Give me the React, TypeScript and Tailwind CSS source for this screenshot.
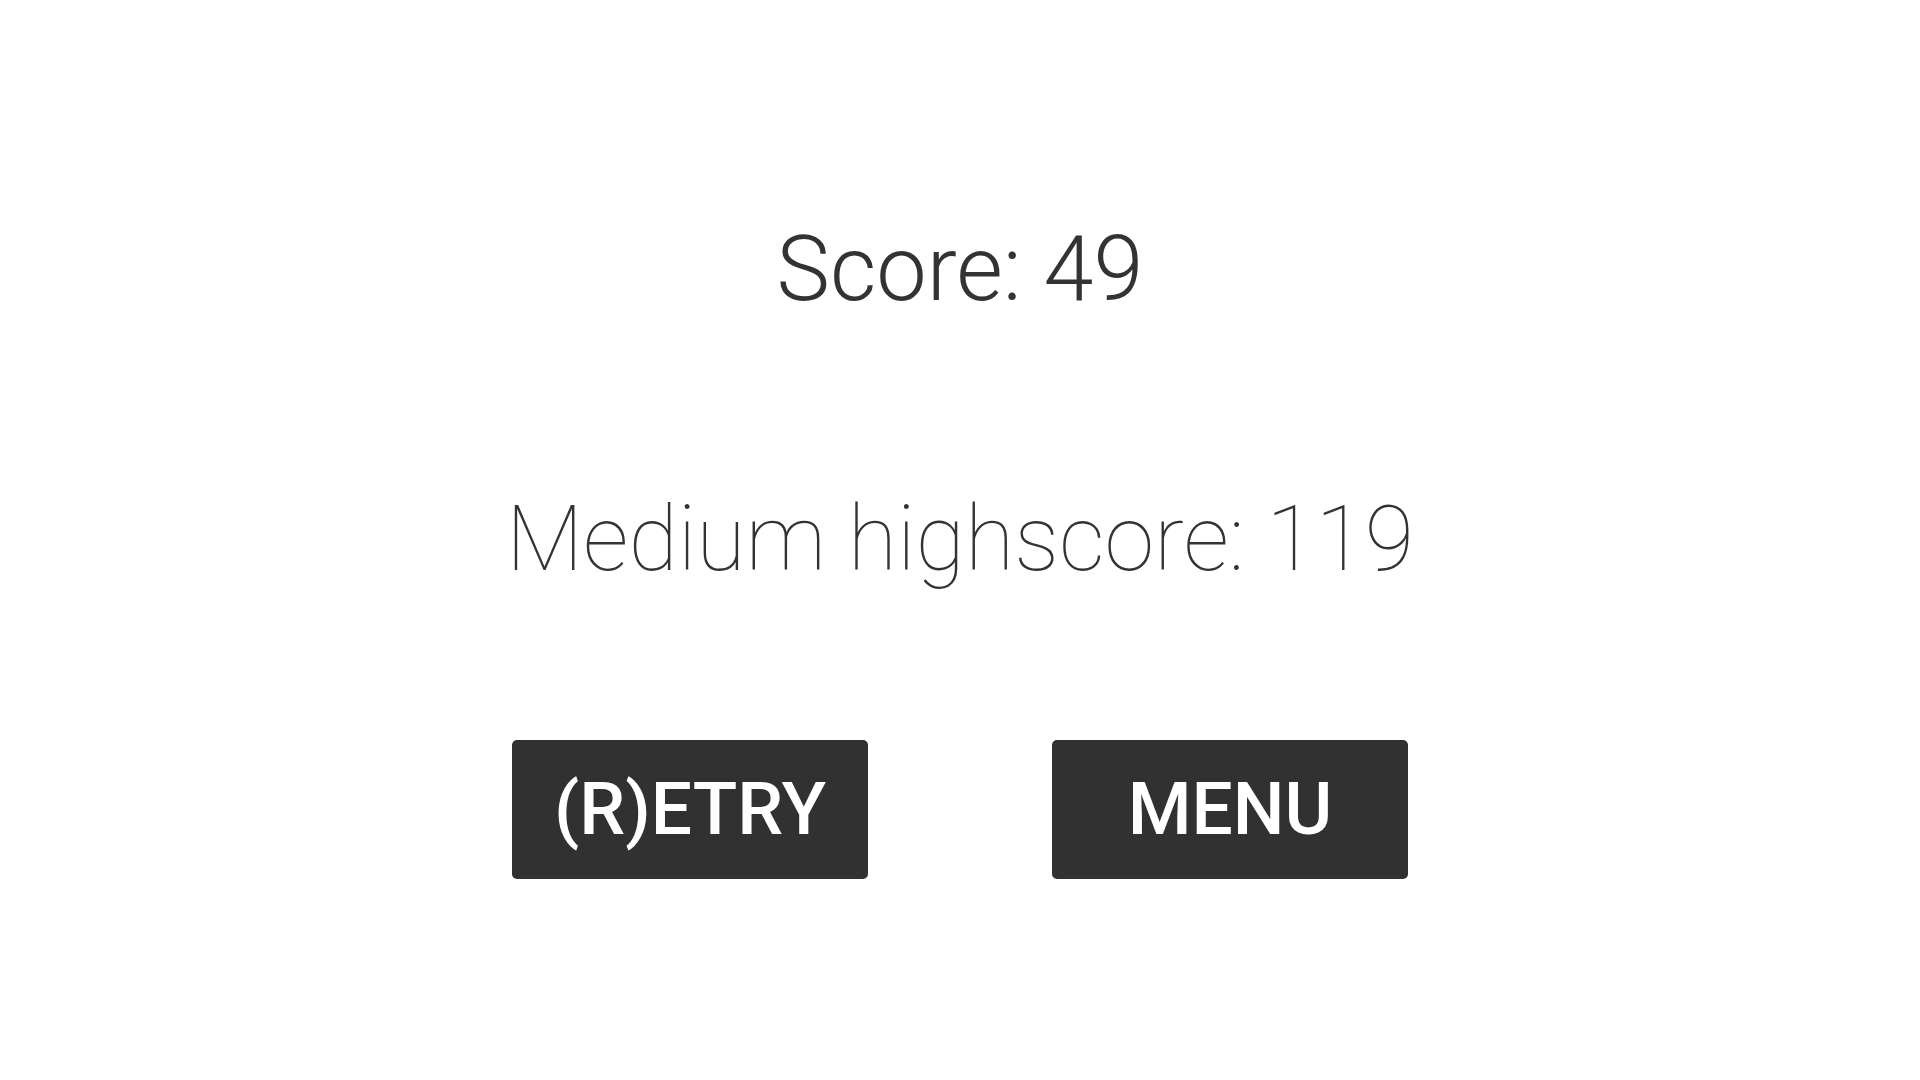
export default function App() {
  return (
    <div
      className="w-[1920px] h-[1080px] bg-white flex flex-col items-center text-[#333333]"
      style={{ fontFamily: "Roboto, 'Liberation Sans', sans-serif" }}
    >
      <div className="mt-[225px] text-[90px] leading-none font-light">Score: 49</div>
      <div className="mt-[180px] text-[90px] leading-none font-thin">Medium highscore: 119</div>
      <div className="mt-[155px] flex gap-[184px]">
        <button className="w-[356px] h-[139px] rounded-[5px] bg-[#313131] text-white text-[73px] leading-none font-medium flex items-center justify-center">
          (R)ETRY
        </button>
        <button className="w-[356px] h-[139px] rounded-[5px] bg-[#313131] text-white text-[73px] leading-none font-medium flex items-center justify-center">
          MENU
        </button>
      </div>
    </div>
  );
}
